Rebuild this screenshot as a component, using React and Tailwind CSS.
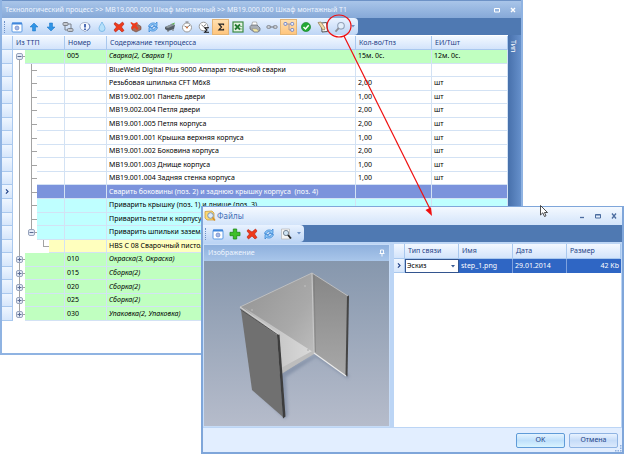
import { useState } from "react";
import clsx from "clsx";

// operations and transitions of the tech process, level = depth in the tree
const rows = [
    { level: 0, num: "005", text: "Сварка(2, Сварка 1)", qty: "15м. 0с.", unit: "12м. 0с.", open: true, first: true },
    { level: 1, kind: "item", text: "BlueWeld Digital Plus 9000 Аппарат точечной сварки" },
    { level: 1, kind: "item", text: "Резьбовая шпилька CFT M6x8", qty: "2,00", unit: "шт" },
    { level: 1, kind: "item", text: "МВ19.002.001 Панель двери", qty: "1,00", unit: "шт" },
    { level: 1, kind: "item", text: "МВ19.002.004 Петля двери", qty: "2,00", unit: "шт" },
    { level: 1, kind: "item", text: "МВ19.001.005 Петля корпуса", qty: "2,00", unit: "шт" },
    { level: 1, kind: "item", text: "МВ19.001.001 Крышка верхняя корпуса", qty: "1,00", unit: "шт" },
    { level: 1, kind: "item", text: "МВ19.001.002 Боковина корпуса", qty: "2,00", unit: "шт" },
    { level: 1, kind: "item", text: "МВ19.001.003 Днище корпуса", qty: "1,00", unit: "шт" },
    { level: 1, kind: "item", text: "МВ19.001.004 Задняя стенка корпуса", qty: "1,00", unit: "шт" },
    { level: 1, kind: "selected", text: "Сварить боковины (поз. 2) и заднюю крышку корпуса  (поз. 4)" },
    { level: 1, kind: "step", text: "Приварить крышку (поз. 1) и днище (поз. 3)" },
    { level: 1, kind: "step", text: "Приварить петли к корпусу" },
    { level: 1, kind: "step", text: "Приварить шпильки заземления", open: true },
    { level: 2, kind: "tool", text: "HBS C 08 Сварочный пистолет" },
    { level: 0, num: "010", text: "Окраска(3, Окраска)" },
    { level: 0, num: "015", text: "Сборка(2)" },
    { level: 0, num: "020", text: "Сборка(2)" },
    { level: 0, num: "025", text: "Сборка(2)" },
    { level: 0, num: "030", text: "Упаковка(2, Упаковка)", last: true },
];

const rowColor = {
    item: "bg-white text-black",
    selected: "bg-[#7b93dc] text-white",
    step: "bg-[#bfffff] text-black",
    tool: "bg-[#ffffbe] text-black",
    operation: "bg-[#c0ffc0] text-black",
};

const icons = {
    form: (
        <>
            <rect x="1" y="2" width="10" height="9" rx="1" fill="#fff" stroke="#5c9be4" />
            <path d="M1 2.5h10" stroke="#3f86dc" strokeWidth="2" />
            <circle cx="6" cy="7" r="2" fill="#a5b9e6" stroke="#6a85c8" strokeWidth=".7" />
        </>
    ),
    up: <path d="M6 2l4 4H7.5v4h-3V6H2z" fill="#2f94e6" stroke="#1672c4" strokeWidth=".5" />,
    down: <path d="M6 10L2 6h2.5V2h3v4H10z" fill="#2f94e6" stroke="#1672c4" strokeWidth=".5" />,
    links: (
        <g fill="#c5c9cf" stroke="#7b8089" strokeWidth="1">
            <rect x="1" y="1.500" width="5" height="3" rx="1" />
            <rect x="5.500" y="7.500" width="5.500" height="3" rx="1" />
            <path d="M3 4.500V9h2.500M6 3h3v4.500" fill="none" />
        </g>
    ),
    info: (
        <>
            <path d="M6 1.500c3 0 5 1.500 5 4s-2 4-4 4L6 11 5 9.500C3 9.500 1 8 1 5.500s2-4 5-4z" fill="#f4f8ff" stroke="#9aa8c2" strokeWidth=".8" />
            <path d="M9.500 3c2 2 1.500 5-1.500 6.500" fill="none" stroke="#5d78b8" />
            <path d="M6 3v3.500M6 7.500V9" stroke="#163f9e" strokeWidth="1.500" />
        </>
    ),
    drop: <path d="M6 1c1 2.500 3 4 3 6.500a3 3 0 0 1-6 0C3 5 5 3.500 6 1z" fill="#b5e0fa" stroke="#6fb4e4" strokeWidth=".8" />,
    remove: <path d="M2 1.500l4 2.500 3.500-3 1.500 2L8.500 6 11 9.500l-2 1.500-3-3-3.500 3-1.500-2L3.500 6 1 3z" fill="#ee3b1c" stroke="#b81d0c" strokeWidth=".6" />,
    removeAll: (
        <>
            <path d="M2 5l6-1.500 3 2v3l-5 2.500-4-2z" fill="#a86b58" stroke="#6b4438" strokeWidth=".6" />
            <path d="M1 1l3 1.500L7 1l1 1.500L6 4.500l2.500 3L7 9 4.500 6.500 2 8.500 1 7l1.500-2.500L.5 2z" fill="#ee3b1c" />
        </>
    ),
    refresh: (
        <g fill="#8cc5f5" stroke="#2f7fd2" strokeWidth=".7">
            <path d="M1.500 5.500C2 2.500 6 1 8.500 2.500L10 1v4.500H6L7.500 4C5.500 3 4 4 3.500 5.500z" />
            <path d="M10.500 6.500C10 9.500 6 11 3.500 9.500L2 11V6.500h4L4.500 8C6.500 9 8 8 8.500 6.500z" />
        </g>
    ),
    machine: (
        <>
            <path d="M1 6l7-3 3 1-1 4-6 2-3-2z" fill="#555e66" />
            <path d="M1 6l7-3 3 1-7 3z" fill="#8c979d" />
            <path d="M7 3l4-1.500-1 2z" fill="#57b347" />
            <path d="M4 9v2M9 8v2" stroke="#777" />
        </>
    ),
    clock: (
        <>
            <circle cx="6" cy="6.500" r="4.500" fill="#fff" stroke="#999" />
            <path d="M6 6.500L9 4M3.500 5L6 6.500M4.500 1h3" fill="none" stroke="#555" strokeWidth=".8" />
            <circle cx="6" cy="6.500" r=".9" fill="#d36a30" />
        </>
    ),
    clockSum: (
        <>
            <circle cx="5.500" cy="5.500" r="4.300" fill="#fff" stroke="#999" />
            <path d="M5.500 5.500L8 3.500M3.500 4l2 1.500" stroke="#555" strokeWidth=".8" />
            <path d="M11 6.800H6.800L9 9l-2.200 2.200H11" fill="none" stroke="#111" strokeWidth="1.100" />
        </>
    ),
    sum: <path d="M8.500 4.200V3.200H4L6.500 6 4 8.800h4.500v-1" fill="none" stroke="#222" strokeWidth="1.200" />,
    excel: (
        <>
            <rect x="1" y="1" width="10" height="10" fill="#e6f3e4" stroke="#3c8a43" strokeWidth="1.200" />
            <path d="M3 3.500l5 5M8 3.500l-5 5" stroke="#237a31" strokeWidth="1.800" />
            <path d="M8 5.500h2.500M8 8h2.500" stroke="#63a567" strokeWidth=".8" />
        </>
    ),
    print: (
        <>
            <path d="M2.500 5l1-4h4l1 4z" fill="#fff" stroke="#999" strokeWidth=".7" />
            <path d="M1 5.500l1.500-1.500h5.500l3 3v2.500L9 11H5L1 8z" fill="#a9aeb5" stroke="#5f646c" strokeWidth=".7" />
            <path d="M3 7.500l5 .5 1.500 2-1 .8H5z" fill="#f3e9a6" stroke="#777" strokeWidth=".4" />
        </>
    ),
    chain: (
        <g fill="#c9cdd3" stroke="#878d96" strokeWidth="1">
            <rect x=".8" y="4.500" width="4" height="3" rx="1.500" />
            <rect x="7.200" y="4.500" width="4" height="3" rx="1.500" />
            <path d="M3.500 6h5" strokeWidth="1.300" />
        </g>
    ),
    tree: (
        <>
            <path d="M3 3h6M6 3v6h3" fill="none" stroke="#8e86a0" strokeWidth=".7" />
            <g fill="#eef2ff" stroke="#5a74c2" strokeWidth=".8">
                <rect x="1" y="1.500" width="2.800" height="2.800" rx=".8" />
                <rect x="7.800" y="1.500" width="2.800" height="2.800" rx=".8" />
                <rect x="7.800" y="7.500" width="2.800" height="2.800" rx=".8" />
            </g>
        </>
    ),
    ok: (
        <>
            <circle cx="6" cy="6" r="4.600" fill="#22a834" stroke="#15802a" strokeWidth=".6" />
            <path d="M3.500 6l2 2 3.200-3.700" fill="none" stroke="#fff" strokeWidth="1.500" />
        </>
    ),
    note: (
        <>
            <path d="M4.500 2l5-.5 1 9-5.500.5z" fill="#fdfdfd" stroke="#444" strokeWidth=".9" />
            <path d="M1 1.500L4 1l4 6-.5 2-2-.5z" fill="#f0d9a8" stroke="#7b6239" strokeWidth=".6" />
        </>
    ),
    search: (
        <>
            <circle cx="7" cy="4.800" r="3.300" fill="#e3effb" stroke="#92a3b9" strokeWidth="1.100" />
            <path d="M4.700 7.200L1.500 10.700" stroke="#8d8f96" strokeWidth="1.800" />
        </>
    ),
    add: <path d="M4.300 1h3.400v3.300H11v3.400H7.700V11H4.300V7.700H1V4.300h3.300z" fill="#3fc02c" stroke="#1f8a17" strokeWidth=".8" />,
    preview: (
        <>
            <path d="M1.500 1h8v10h-8z" fill="#f5f5f5" stroke="#b5b5b5" strokeWidth=".7" />
            <circle cx="6" cy="5" r="2.600" fill="#cfe3f3" stroke="#6e7c8a" strokeWidth=".9" />
            <path d="M8 7l3 3.500" stroke="#222" strokeWidth="1.800" />
        </>
    ),
    files: (
        <>
            <path d="M1 1.500l7-.5 2 2v7H3L1 8z" fill="#fbd874" stroke="#c8962d" strokeWidth=".7" />
            <circle cx="6.500" cy="5.500" r="2.800" fill="#dcebfa" stroke="#7f94ad" />
            <path d="M8.500 7.500l2.500 3" stroke="#d98e24" strokeWidth="1.500" />
        </>
    ),
};

const mainTools = [
    ["form", "Карточка"], ["up", "Вверх"], ["down", "Вниз"], ["links", "Связи"], ["info", "Информация"],
    ["drop", "Материал"], ["remove", "Удалить"], ["removeAll", "Удалить все"], ["refresh", "Обновить"],
    ["machine", "Оборудование"], ["clock", "Время"], ["clockSum", "Сумма времени"], ["sum", "Сумма"],
    ["excel", "Excel"], ["print", "Печать"], ["chain", "Цепочка"], ["tree", "Дерево"], ["ok", "Проверить"],
    ["note", "Заметка"], ["search", "Просмотр файлов"],
];

const fileTools = [
    ["form", "Карточка"], ["add", "Добавить"], ["remove", "Удалить"], ["refresh", "Обновить"], ["preview", "Просмотр"],
];

const Icon = ({ name, className = "size-3" }) => (
    <svg viewBox="0 0 12 12" className={clsx("shrink-0", className)} aria-hidden="true">
        {icons[name]}
    </svg>
);

const ToolBar = ({ tools, active = [] }) => (
    <div className="flex bg-[#4f79b2]">
        <div className="flex h-[17px] items-center rounded-r-sm bg-linear-to-b from-[#eaf3ff] to-[#bdd5f5] pl-[2px]">
            <span className="mr-[3px] h-3 border-l border-dotted border-[#6c91c9]" />
            {tools.map(([name, label]) => (
                <button
                    key={name}
                    type="button"
                    aria-label={label}
                    className={clsx(
                        "flex h-4 w-[17px] items-center justify-center",
                        active.includes(name) && "border border-[#e3b577] bg-linear-to-b from-[#ffe0b0] to-[#ffc57c]"
                    )}
                >
                    <Icon name={name} />
                </button>
            ))}
            <button type="button" aria-label="Еще" className="flex w-[10px] justify-center">
                <svg viewBox="0 0 4 3" className="w-1" aria-hidden="true">
                    <path d="M0 0h4L2 2.500z" fill="#6c8fc4" />
                </svg>
            </button>
        </div>
    </div>
);

const Expander = ({ open, onClick }) => (
    <button
        type="button"
        aria-label={open ? "Свернуть" : "Развернуть"}
        onClick={onClick}
        className="mx-auto block size-[7px] rounded-[2px] border border-[#98a4bc] bg-[#e4eaf6]"
    >
        <svg viewBox="0 0 5 5" className="size-[5px]" aria-hidden="true">
            <path d={open ? "M.5 2.500h4" : "M.5 2.500h4M2.500 .5v4"} stroke="#5a6b92" />
        </svg>
    </button>
);

// connector lines of the tree, drawn as cell backgrounds
const line = {
    through: "[background:linear-gradient(#a3a3a3,#a3a3a3)_6px_0/1px_100%_no-repeat]",
    start: "[background:linear-gradient(#a3a3a3,#a3a3a3)_6px_100%/1px_50%_no-repeat,linear-gradient(#a3a3a3,#a3a3a3)_100%_50%/6px_1px_no-repeat]",
    branch: "[background:linear-gradient(#a3a3a3,#a3a3a3)_6px_0/1px_100%_no-repeat,linear-gradient(#a3a3a3,#a3a3a3)_100%_50%/6px_1px_no-repeat]",
    end: "[background:linear-gradient(#a3a3a3,#a3a3a3)_6px_0/1px_50%_no-repeat,linear-gradient(#a3a3a3,#a3a3a3)_100%_50%/6px_1px_no-repeat]",
};

const headCell = "border-r border-b border-[#a9c8ee] bg-linear-to-b from-[#f3f8ff] to-[#d3e4fb] p-0 pl-[3px] text-left font-normal text-[#1e3f86]";
const markCell = "border-r border-b border-[#a9c8ee] bg-linear-to-b from-[#eff6ff] to-[#d6e6fb] p-0";

const ProcessRow = ({ row, onToggle }) => {
    const kind = row.kind || "operation";
    const cell = clsx("overflow-hidden border-r border-b border-[#d3e2f4] p-0 pl-[2px] whitespace-pre", rowColor[kind]);

    return (
        <tr>
            <td className={markCell}>
                {kind === "selected" && (
                    <svg viewBox="0 0 5 7" className="mx-auto h-[5px] w-1" aria-hidden="true">
                        <path d="M1 .5l3 3-3 3" fill="none" stroke="#1e3f86" strokeWidth="1.500" />
                    </svg>
                )}
            </td>
            {row.level === 0 && (
                <td className={clsx("p-0", row.first ? line.start : row.last ? line.end : line.branch)}>
                    <Expander open={row.open} onClick={onToggle} />
                </td>
            )}
            {row.level > 0 && <td className={clsx("p-0", line.through)} />}
            {row.level === 1 && (
                <td className={clsx("p-0", row.open ? line.end : line.branch)}>
                    {row.open && <Expander open onClick={onToggle} />}
                </td>
            )}
            {row.level === 2 && (
                <>
                    <td className="p-0" />
                    <td className={clsx("p-0", line.end)} />
                </>
            )}
            <td colSpan={3 - row.level} className={cell} />
            <td className={cell}>{row.num}</td>
            <td className={clsx(cell, row.level === 0 && "italic")}>{row.text}</td>
            <td className={cell}>{row.qty}</td>
            <td className={cell}>{row.unit}</td>
        </tr>
    );
};

const ProcessWindow = () => {
    const [closed, setClosed] = useState([]);

    const toggle = (i) => {
        setClosed((prev) => (prev.includes(i) ? prev.filter((n) => n !== i) : [...prev, i]));
    };

    return (
        <section className="absolute top-0 right-[101px] left-0 border-2 border-t-0 border-[#8fb3e2] bg-white">
            <header className="flex h-[18px] items-center justify-between border-t border-[#6d92c6] bg-linear-to-b from-[#a9c5e9] to-[#86a9d8] pr-1 pl-[3px] text-[#eef5ff]">
                <h1 className="truncate">
                    Технологический процесс &gt;&gt; МВ19.000.000 Шкаф монтажный &gt;&gt; МВ19.000.000 Шкаф монтажный Т1
                </h1>
                <div className="flex gap-2">
                    <button type="button" aria-label="Развернуть окно">
                        <svg viewBox="0 0 8 8" className="size-2"><path d="M1.500 2.500h5v3.500h-5z" fill="none" stroke="#fff" /></svg>
                    </button>
                    <button type="button" aria-label="Закрыть окно">
                        <svg viewBox="0 0 8 8" className="size-2"><path d="M2 2l4 4M6 2L2 6" stroke="#fff" strokeWidth="1.400" /></svg>
                    </button>
                </div>
            </header>
            <ToolBar tools={mainTools} active={["sum", "tree"]} />
            <div className="flex">
                <div className="min-w-0 flex-1 pt-px pb-8">
                    <table className="h-[285px] w-full table-fixed border-separate border-spacing-0">
                        <colgroup>
                            <col className="w-[11px]" />
                            <col className="w-3" />
                            <col className="w-3" />
                            <col className="w-3" />
                            <col className="w-4" />
                            <col className="w-[42px]" />
                            <col />
                            <col className="w-[76px]" />
                            <col className="w-[76px]" />
                        </colgroup>
                        <thead>
                            <tr className="h-[14px]">
                                <th className={headCell} aria-label="Метка" />
                                <th colSpan={4} className={headCell}>Из ТТП</th>
                                <th className={headCell}>Номер</th>
                                <th className={headCell}>Содержание техпроцесса</th>
                                <th className={headCell}>Кол-во/Тпз</th>
                                <th className={headCell}>ЕИ/Тшт</th>
                            </tr>
                        </thead>
                        <tbody>
                            {rows.map((row, i) => (
                                <ProcessRow
                                    key={i}
                                    row={{ ...row, open: closed.includes(i) ? !row.open : row.open }}
                                    onToggle={() => toggle(i)}
                                />
                            ))}
                        </tbody>
                    </table>
                </div>
                <aside className="w-[13px] bg-linear-to-r from-[#4770ab] to-[#6690cb] pt-[5px] text-white">
                    <button type="button" className="block [writing-mode:vertical-rl]">Тип</button>
                </aside>
            </div>
        </section>
    );
};

const CabinetPreview = () => (
    <svg viewBox="0 0 185 167" preserveAspectRatio="xMidYMid slice" className="block h-[165px] w-full" role="img" aria-label="Шкаф">
        <defs>
            <linearGradient id="sky" x1="0" y1="0" x2="0" y2="1">
                <stop offset="0" stopColor="#8697ad" />
                <stop offset="1" stopColor="#b6bccb" />
            </linearGradient>
            <linearGradient id="wall" x1="0" y1="0" x2="1" y2="1">
                <stop offset="0" stopColor="#929292" />
                <stop offset=".6" stopColor="#a9a9a9" />
                <stop offset="1" stopColor="#c4c4c4" />
            </linearGradient>
            <linearGradient id="floor" x1="0" y1="0" x2="1" y2="0">
                <stop offset="0" stopColor="#b5b5b5" />
                <stop offset="1" stopColor="#dadada" />
            </linearGradient>
            <linearGradient id="side" x1="0" y1="0" x2="0" y2="1">
                <stop offset="0" stopColor="#868686" />
                <stop offset="1" stopColor="#a8a8a8" />
            </linearGradient>
            <filter id="soft"><feGaussianBlur stdDeviation="1.500" /></filter>
        </defs>
        <rect width="185" height="167" fill="url(#sky)" />
        <path d="M50 130l31 29 3-4-2-38 30-20 32 22 1-4-30-22-40 20z" fill="#76849d" opacity=".6" filter="url(#soft)" />
        <path d="M36 47l72-34 2 80-34 22z" fill="url(#wall)" />
        <path d="M39 47l70 45-32 21-4-38z" fill="url(#floor)" />
        <path d="M77 108l33-18v4l-32 19z" fill="#bdbdbd" />
        <path d="M108 13l36 23-2 80-32-23z" fill="url(#side)" />
        <path d="M143 36l2-.5-1.500 81-2-1z" fill="#454545" />
        <path d="M108 13l2 80" stroke="#c6c6c6" strokeWidth="1.200" />
        <path d="M110 14l1.500 78" stroke="#777" strokeWidth=".5" />
        <path d="M36 47l72-34 36 23" fill="none" stroke="#c2c2c2" strokeWidth=".9" />
        <path d="M110 93l32 23" stroke="#ececec" strokeWidth="1.200" />
        <path d="M37 50l36 25 6 82-31-27z" fill="#707070" />
        <path d="M73 75l2.500-.5 6 82-2.500 2z" fill="#3d3d3d" />
        <path d="M36 47l38 26.500" stroke="#d0d0d0" strokeWidth="1.200" />
        <path d="M36.500 49.500L74 75" stroke="#494949" strokeWidth=".9" />
        <circle cx="101" cy="26" r=".7" fill="#ccc" />
        <circle cx="48" cy="50" r=".7" fill="#ccc" />
        <circle cx="104" cy="90" r=".7" fill="#999" />
    </svg>
);

const FilesDialog = () => {
    const [link, setLink] = useState("Эскиз");

    return (
        <section className="absolute top-[206px] right-0 left-[201px] border-2 border-t border-[#7fa6da] bg-[#bcd5f5]">
            <header className="flex h-[18px] items-center bg-linear-to-b from-[#f4f9ff] to-[#d3e4fa] pr-1 pl-px text-[#3f6db5]">
                <Icon name="files" />
                <h2 className="ml-px flex-1 text-[8px]">Файлы</h2>
                <div className="flex gap-2 text-[#4b6c9f]">
                    <button type="button" aria-label="Свернуть">
                        <svg viewBox="0 0 8 8" className="size-2"><path d="M2 5.500h4" stroke="currentColor" strokeWidth="1.300" /></svg>
                    </button>
                    <button type="button" aria-label="Развернуть">
                        <svg viewBox="0 0 8 8" className="size-2"><path d="M1.500 2.500h5v3.500h-5zM1.500 3h5" fill="none" stroke="currentColor" /></svg>
                    </button>
                    <button type="button" aria-label="Закрыть">
                        <svg viewBox="0 0 8 8" className="size-2"><path d="M2 1.500l4 5M6 1.500l-4 5" stroke="currentColor" strokeWidth="1.300" /></svg>
                    </button>
                </div>
            </header>
            <ToolBar tools={fileTools} />
            <div className="flex gap-1 pt-[2px] pr-px">
                <figure className="flex w-[187px] shrink-0 flex-col border border-[#c7dcf7]">
                    <figcaption className="flex h-4 items-center justify-between bg-linear-to-b from-[#8eb0dd] to-[#a9c6ea] px-1 text-[#eef5ff]">
                        Изображение
                        <svg viewBox="0 0 6 8" className="h-2 w-[6px]" aria-hidden="true">
                            <path d="M1.500 1h3v3.500h-3zM.5 4.500h5M3 4.500V7.500" fill="none" stroke="#fff" strokeWidth=".9" />
                        </svg>
                    </figcaption>
                    <CabinetPreview />
                </figure>
                <div className="min-w-0 flex-1 bg-white">
                    <table className="w-full table-fixed border-separate border-spacing-0">
                        <colgroup>
                            <col className="w-[11px]" />
                            <col />
                            <col />
                            <col />
                            <col />
                        </colgroup>
                        <thead>
                            <tr className="h-[15px]">
                                <th className={headCell} aria-label="Метка" />
                                <th className={headCell}>Тип связи</th>
                                <th className={headCell}>Имя</th>
                                <th className={headCell}>Дата</th>
                                <th className={headCell}>Размер</th>
                            </tr>
                        </thead>
                        <tbody>
                            <tr className="h-[14px] bg-[#2f66c4] text-white">
                                <td className={markCell}>
                                    <svg viewBox="0 0 5 7" className="mx-auto h-[5px] w-1" aria-hidden="true">
                                        <path d="M1 .5l3 3-3 3" fill="none" stroke="#1e3f86" strokeWidth="1.500" />
                                    </svg>
                                </td>
                                <td className="border border-[#33558f] bg-white p-0 text-black">
                                    <div className="flex items-center pr-[3px]">
                                        <select
                                            aria-label="Тип связи"
                                            value={link}
                                            onChange={(e) => setLink(e.target.value)}
                                            className="min-w-0 flex-1 appearance-none bg-white pl-px outline-none"
                                        >
                                            <option>Эскиз</option>
                                        </select>
                                        <svg viewBox="0 0 4 3" className="w-1" aria-hidden="true">
                                            <path d="M0 0h4L2 2.500z" fill="#3a5b93" />
                                        </svg>
                                    </div>
                                </td>
                                <td className="border-r border-[#7fa2de] p-0 pl-[2px]">step_1.png</td>
                                <td className="border-r border-[#7fa2de] p-0 pl-[2px]">29.01.2014</td>
                                <td className="p-0 pr-[2px] text-right">42 Kb</td>
                            </tr>
                        </tbody>
                    </table>
                </div>
            </div>
            <footer className="relative mt-px flex h-6 items-center justify-end gap-1 bg-[#e2eeff] pr-1 text-[#1e3f86]">
                <button type="button" className="h-[15px] w-[49px] rounded-[2px] border border-[#5f9bd8] bg-linear-to-b from-[#e4f3ff] via-[#bfe0fb] to-[#d9f4ff]">OK</button>
                <button type="button" className="h-[15px] w-[49px] rounded-[2px] border border-[#8fb3e2] bg-linear-to-b from-[#e8f2ff] via-[#c6dcf8] to-[#dbe9fc]">Отмена</button>
                {/* resize grip */}
                <svg viewBox="0 0 8 8" className="absolute right-0 bottom-0 size-2" aria-hidden="true">
                    <path d="M6 1h1.500v1.500H6zM6 3.500h1.500V5H6zM3.500 6H5v1.500H3.500zM6 6h1.500v1.500H6zM1 6h1.500v1.500H1z" fill="#8fb0de" />
                </svg>
            </footer>
        </section>
    );
};

const App = () => {
    return (
        <main className="relative min-h-screen overflow-hidden bg-white font-['Noto_Sans',sans-serif] text-[7px] leading-[10px]">
            <ProcessWindow />
            <FilesDialog />
            {/* callout from the search button to the files dialog */}
            <svg viewBox="0 0 120 210" className="pointer-events-none absolute top-[10px] left-[320px] h-[210px] w-[120px]" aria-hidden="true">
                <ellipse cx="19" cy="16" rx="12" ry="11" fill="none" stroke="#f00f0f" strokeWidth="1.200" />
                <path d="M24 26l86 173" stroke="#f00f0f" strokeWidth="1.200" />
                <path d="M112 206l-6.500-6 5.500-2.800z" fill="#f00f0f" />
            </svg>
            <svg viewBox="0 0 8 12" className="pointer-events-none absolute top-[205px] left-[540px] h-3 w-2" aria-hidden="true">
                <path d="M.5.5v9.500l2.300-2.200L4.500 11.500l1.500-.7L4.500 7.500h3z" fill="#fff" stroke="#222" strokeWidth=".8" />
            </svg>
        </main>
    );
};

export default App;
